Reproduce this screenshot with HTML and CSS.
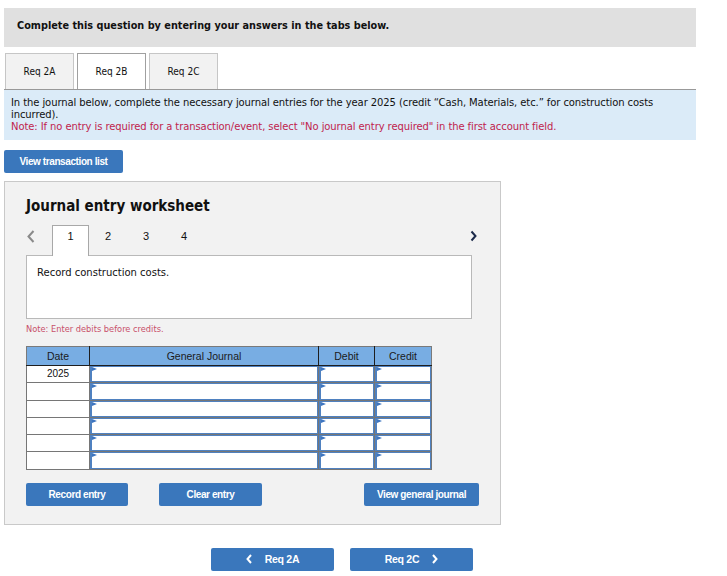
FILE: index.html
```html
<!DOCTYPE html>
<html>
<head>
<meta charset="utf-8">
<title>Journal entry worksheet</title>
<link rel="stylesheet" href="styles.css">
</head>
<body>
<div class="page">
  <div class="banner">Complete this question by entering your answers in the tabs below.</div>
  <div class="tabs">
    <div class="tab">Req 2A</div>
    <div class="tab active">Req 2B</div>
    <div class="tab">Req 2C</div>
  </div>
  <div class="instr">
    <p>In the journal below, complete the necessary journal entries for the year 2025 (credit “Cash, Materials, etc.” for construction costs incurred).</p>
    <p class="note">Note: If no entry is required for a transaction/event, select "No journal entry required" in the first account field.</p>
  </div>
  <button class="btn btn-list">View transaction list</button>

  <div class="panel">
    <h2 class="title">Journal entry worksheet</h2>
    <div class="nav">
      <span class="arrow prev"><svg width="8" height="13" viewBox="0 0 8 13"><polyline points="6.5,1 1.5,6.5 6.5,12" fill="none" stroke="#8a8a8a" stroke-width="2"/></svg></span>
      <span class="num active">1</span>
      <span class="num">2</span>
      <span class="num">3</span>
      <span class="num">4</span>
      <span class="spacer"></span>
      <span class="arrow next"><svg width="7" height="12" viewBox="0 0 7 12"><polyline points="1.5,1.5 5.5,6 1.5,10.5" fill="none" stroke="#1b2a4a" stroke-width="2"/></svg></span>
    </div>
    <div class="desc">Record construction costs.</div>
    <div class="small-note">Note: Enter debits before credits.</div>

    <table class="journal">
      <colgroup><col class="c-date"><col class="c-acct"><col class="c-dr"><col class="c-cr"></colgroup>
      <thead>
        <tr><th>Date</th><th>General Journal</th><th>Debit</th><th class="last">Credit</th></tr>
      </thead>
      <tbody>
        <tr><td class="date">2025</td><td><div class="inp"></div></td><td><div class="inp"></div></td><td><div class="inp"></div></td></tr>
        <tr><td class="date"></td><td><div class="inp"></div></td><td><div class="inp"></div></td><td><div class="inp"></div></td></tr>
        <tr><td class="date"></td><td><div class="inp"></div></td><td><div class="inp"></div></td><td><div class="inp"></div></td></tr>
        <tr><td class="date"></td><td><div class="inp"></div></td><td><div class="inp"></div></td><td><div class="inp"></div></td></tr>
        <tr><td class="date"></td><td><div class="inp"></div></td><td><div class="inp"></div></td><td><div class="inp"></div></td></tr>
        <tr><td class="date"></td><td><div class="inp"></div></td><td><div class="inp"></div></td><td><div class="inp"></div></td></tr>
      </tbody>
    </table>

    <div class="actions">
      <button class="btn btn-record">Record entry</button>
      <button class="btn btn-clear">Clear entry</button>
      <button class="btn btn-view">View general journal</button>
    </div>
  </div>

  <div class="pager">
    <button class="btn btn-pg"><svg class="chev" width="7" height="10" viewBox="0 0 7 10"><polyline points="5,1 1.5,5 5,9" fill="none" stroke="#fff" stroke-width="2"/></svg><span>Req 2A</span></button>
    <button class="btn btn-pg"><span>Req 2C</span><svg class="chev" width="7" height="10" viewBox="0 0 7 10"><polyline points="2,1 5.5,5 2,9" fill="none" stroke="#fff" stroke-width="2"/></svg></button>
  </div>
</div>
</body>
</html>
```

FILE: styles.css
```css
body {
  margin: 0;
  font-family: "DejaVu Sans", Verdana, sans-serif;
  font-size: 10px;
  color: #111;
  background: #fff;
}

.page {
  width: 692px;
  margin-left: 4px;
  padding-top: 8px;
}

.banner {
  background: #e0e0e0;
  height: 39px;
  box-sizing: border-box;
  padding: 11px 13px 0;
  font-family: "DejaVu Sans Condensed", "DejaVu Sans", sans-serif;
  font-weight: bold;
  font-size: 10.8px;
  line-height: 14px;
}

.tabs {
  display: flex;
  gap: 3px;
  margin-top: 6px;
  padding-left: 1px;
  height: 36px;
}

.tab {
  width: 69px;
  box-sizing: border-box;
  border: 1px solid #c6c6c6;
  border-bottom: none;
  background: #f2f2f2;
  display: flex;
  align-items: center;
  justify-content: center;
  font-family: "DejaVu Sans Condensed", "DejaVu Sans", sans-serif;
  font-size: 10px;
}

.tab.active {
  background: #fff;
  border-color: #a0a0a0;
}

.instr {
  background: #dbebf8;
  border-top: 1px solid #999;
  padding: 7px 7px 7px 7px;
  line-height: 12px;
  font-size: 10px;
  letter-spacing: -0.09px;
}

.instr p {
  margin: 0;
}

.instr .note {
  color: #c0234d;
}

.btn {
  border: none;
  border-radius: 2px;
  background: #3a77bc;
  color: #fff;
  font-family: "Liberation Sans", Arial, sans-serif;
  font-weight: bold;
  font-size: 10px;
  letter-spacing: -0.4px;
  height: 23px;
  padding: 0;
  cursor: pointer;
}

.btn-list {
  display: block;
  width: 119px;
  margin-top: 10px;
}

.panel {
  width: 497px;
  box-sizing: border-box;
  margin-top: 8px;
  background: #f2f2f2;
  border: 1px solid #c9c9c9;
  padding: 14px 0 18px 21px;
}

.title {
  margin: 0;
  font-family: "DejaVu Sans Condensed", "DejaVu Sans", sans-serif;
  font-size: 15px;
  line-height: 20px;
  font-weight: bold;
  color: #111;
}

.nav {
  display: flex;
  align-items: stretch;
  width: 451px;
  height: 30px;
  margin-top: 9px;
  position: relative;
  z-index: 1;
  font-family: "Liberation Sans", Arial, sans-serif;
  font-size: 11px;
  line-height: 12px;
}

.arrow {
  display: flex;
  align-items: flex-start;
  padding-top: 5px;
  box-sizing: border-box;
}

.arrow.prev {
  width: 26px;
  padding-left: 1px;
}

.num {
  width: 38px;
  box-sizing: border-box;
  display: flex;
  align-items: flex-start;
  justify-content: center;
  padding-top: 5px;
}

.num.active {
  background: #fff;
  border: 1px solid #a8a8a8;
  border-bottom: none;
  height: 31px;
  width: 37px;
  padding-top: 4px;
}

.spacer {
  flex: 1;
}

.desc {
  width: 446px;
  height: 64px;
  box-sizing: border-box;
  background: #fff;
  border: 1px solid #b9b9b9;
  padding: 11px 10px 0;
  line-height: 12px;
  font-size: 10px;
}

.small-note {
  margin-top: 4px;
  font-family: "DejaVu Sans Condensed", "DejaVu Sans", sans-serif;
  font-size: 9.2px;
  line-height: 12px;
  color: #c8506a;
}

.journal {
  margin-top: 11px;
  border-collapse: collapse;
  table-layout: fixed;
  width: 405px;
  font-family: "Liberation Sans", Arial, sans-serif;
  font-size: 10px;
  background: #fff;
}

.c-date { width: 63px; }
.c-acct { width: 229px; }
.c-dr { width: 56px; }
.c-cr { width: 57px; }

.journal th {
  background: #78ade3;
  font-weight: normal;
  color: #1b1b1b;
  height: 18px;
  padding: 0;
  border: 1px solid #7a7a7a;
  border-bottom: 1px solid #1e1e1e;
  border-right: 1px solid #1e1e1e;
  font-size: 10.5px;
}

.journal th.last {
  border-right-color: #7a7a7a;
}

.journal td {
  height: 16.3px;
  padding: 0;
  border: 1px solid #767676;
  vertical-align: top;
}

.journal td.date {
  text-align: center;
  vertical-align: middle;
  line-height: 12px;
}

.inp {
  position: relative;
  height: 16.3px;
  box-sizing: border-box;
  border: 1px solid #4f81c0;
  border-left-width: 2px;
  background: #fff;
}

.inp::before {
  content: "";
  position: absolute;
  left: 0;
  top: 0;
  border-left: 5px solid #3d75c0;
  border-top: 2.5px solid transparent;
  border-bottom: 2.5px solid transparent;
}

.actions {
  display: flex;
  margin-top: 13px;
  width: 453px;
}

.btn-record { width: 102px; }
.btn-clear { width: 103px; margin-left: 31px; }
.btn-view { width: 115px; margin-left: auto; }

.pager {
  display: flex;
  gap: 16px;
  margin-top: 23px;
  padding-left: 207px;
}

.btn-pg {
  width: 123px;
  display: flex;
  align-items: center;
  justify-content: center;
  gap: 12px;
  font-size: 10.5px;
  letter-spacing: -0.3px;
}

.chev {
  display: block;
}
```
